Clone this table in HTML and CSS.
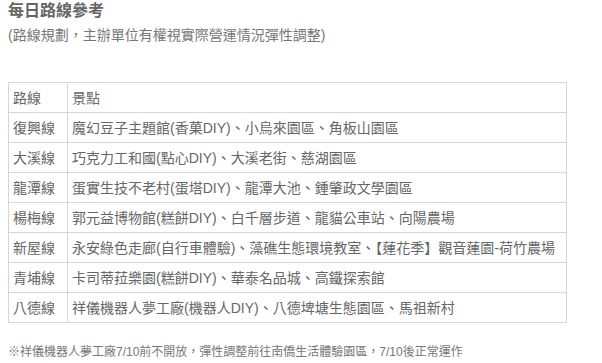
FILE: index.html
```html
<!DOCTYPE html>
<html lang="zh-Hant">
<head>
<meta charset="utf-8">
<link rel="stylesheet" href="styles.css">
</head>
<body>
<h3 class="title">每日路線參考</h3>
<p class="subtitle">(路線規劃，主辦單位有權視實際營運情況彈性調整)</p>
<table class="routes">
  <colgroup><col class="col1"><col></colgroup>
  <tr><td>路線</td><td>景點</td></tr>
  <tr><td>復興線</td><td>魔幻豆子主題館(香菓DIY)、小烏來園區、角板山園區</td></tr>
  <tr><td>大溪線</td><td>巧克力工和國(點心DIY)、大溪老街、慈湖園區</td></tr>
  <tr><td>龍潭線</td><td>蛋實生技不老村(蛋塔DIY)、龍潭大池、鍾肇政文學園區</td></tr>
  <tr><td>楊梅線</td><td>郭元益博物館(糕餅DIY)、白千層步道、龍貓公車站、向陽農場</td></tr>
  <tr><td>新屋線</td><td>永安綠色走廊(自行車體驗)、藻礁生態環境教室、【蓮花季】觀音蓮園-荷竹農場</td></tr>
  <tr><td>青埔線</td><td>卡司蒂菈樂園(糕餅DIY)、華泰名品城、高鐵探索館</td></tr>
  <tr><td>八德線</td><td>祥儀機器人夢工廠(機器人DIY)、八德埤塘生態園區、馬祖新村</td></tr>
</table>
<p class="note">※祥儀機器人夢工廠7/10前不開放，彈性調整前往南僑生活體驗園區，7/10後正常運作</p>
</body>
</html>
```
FILE: styles.css
```css
html, body {
  margin: 0;
  padding: 0;
  background: #fff;
}
body {
  padding: 0 8px;
  font-family: "Liberation Sans", "Noto Sans CJK TC", sans-serif;
  color: #666;
}
.title {
  margin: 0;
  font-size: 16px;
  line-height: 22px;
  font-weight: bold;
  color: #666;
}
.subtitle {
  margin: 3px 0 0;
  font-size: 14px;
  line-height: 20px;
  color: #777;
}
.routes {
  margin-top: 37px;
  width: 559px;
  table-layout: fixed;
  border-collapse: collapse;
  font-size: 14px;
  color: #666;
}
.routes .col1 {
  width: 59px;
}
.routes td {
  border: 1px solid #d6d6d6;
  height: 29px;
  padding: 0 4px;
  line-height: 20px;
  white-space: nowrap;
}
.note {
  margin: 20px 0 0;
  font-size: 12px;
  line-height: 18px;
  color: #777;
}
```
